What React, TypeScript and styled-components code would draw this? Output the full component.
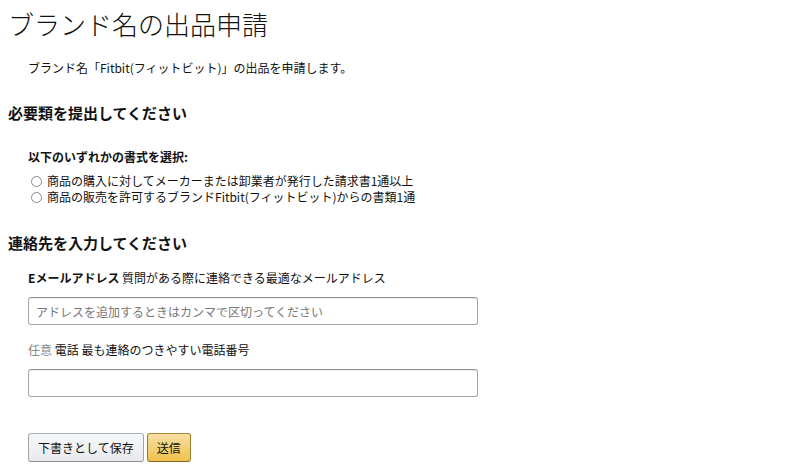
import styled, { createGlobalStyle } from 'styled-components';

const GlobalStyle = createGlobalStyle`
  body {
    margin: 0;
    background: #fff;
    font-family: "Noto Sans CJK JP", "Noto Sans", sans-serif;
    color: #111;
  }
`;

const Page = styled.main`
  padding: 8px;
`;

const Title = styled.h1`
  margin: 0;
  font-size: 26px;
  line-height: 32px;
  font-weight: 300;
  color: #111;
`;

const Intro = styled.p`
  margin: 19px 0 0;
  padding-left: 20px;
  font-size: 12px;
  line-height: 18px;
  color: #111;
`;

const SectionTitle = styled.h2<{ $gap: number }>`
  margin: ${({ $gap }) => $gap}px 0 0;
  font-size: 15px;
  line-height: 20px;
  font-weight: 700;
`;

const SectionBody = styled.div`
  padding-left: 20px;
`;

const ChoiceLabel = styled.div`
  margin-top: 26px;
  font-size: 12px;
  line-height: 16px;
  font-weight: 700;
`;

const RadioList = styled.div`
  margin-top: 8px;
  display: flex;
  flex-direction: column;
`;

const RadioRow = styled.label`
  display: flex;
  align-items: center;
  gap: 5px;
  font-size: 12px;
  line-height: 16px;
  color: #111;
`;

const Radio = styled.input.attrs({ type: 'radio' })`
  appearance: none;
  margin: 0 0 0 3px;
  width: 11px;
  height: 11px;
  border: 1px solid #8a8a8a;
  border-radius: 50%;
  background: #fff;
`;

const FieldLabel = styled.div`
  margin-top: 17px;
  font-size: 12px;
  line-height: 16px;
  color: #111;
`;

const Strong = styled.b`
  font-weight: 700;
`;

const Muted = styled.span`
  color: #888;
`;

const TextInput = styled.input`
  display: block;
  box-sizing: border-box;
  margin-top: 11px;
  width: 450px;
  height: 28px;
  padding: 0 7px;
  border: 1px solid #a6a6a6;
  border-top-color: #949494;
  border-radius: 3px;
  box-shadow: 0 1px 0 rgba(255, 255, 255, 0.5), 0 1px 0 rgba(0, 0, 0, 0.07) inset;
  font-family: inherit;
  font-size: 12px;
  color: #111;
  &::placeholder {
    color: #777;
  }
`;

const Actions = styled.div`
  margin-top: 36px;
  display: flex;
  gap: 3px;
`;

const Button = styled.button<{ $primary?: boolean }>`
  box-sizing: border-box;
  height: 29px;
  padding: 0 ${({ $primary }) => ($primary ? 9 : 9)}px;
  border-radius: 3px;
  border: 1px solid ${({ $primary }) => ($primary ? '#a88734' : '#adb1b8')};
  border-color: ${({ $primary }) =>
    $primary ? '#a88734 #9c7e31 #846a29' : '#adb1b8 #a2a6ac #8d9096'};
  background: ${({ $primary }) =>
    $primary
      ? 'linear-gradient(to bottom, #f7dfa5, #f0c14b)'
      : 'linear-gradient(to bottom, #f7f8fa, #e7e9ec)'};
  font-family: inherit;
  font-size: 12px;
  color: #111;
`;

export default function App() {
  return (
    <>
      <GlobalStyle />
      <Page>
        <Title>ブランド名の出品申請</Title>
        <Intro>ブランド名「Fitbit(フィットビット)」の出品を申請します。</Intro>

        <SectionTitle $gap={26}>必要類を提出してください</SectionTitle>
        <SectionBody>
          <ChoiceLabel>以下のいずれかの書式を選択:</ChoiceLabel>
          <RadioList>
            <RadioRow>
              <Radio name="doc" />
              商品の購入に対してメーカーまたは卸業者が発行した請求書1通以上
            </RadioRow>
            <RadioRow>
              <Radio name="doc" />
              商品の販売を許可するブランドFitbit(フィットビット)からの書類1通
            </RadioRow>
          </RadioList>
        </SectionBody>

        <SectionTitle $gap={28}>連絡先を入力してください</SectionTitle>
        <SectionBody>
          <FieldLabel>
            <Strong>Eメールアドレス</Strong> 質問がある際に連絡できる最適なメールアドレス
          </FieldLabel>
          <TextInput placeholder="アドレスを追加するときはカンマで区切ってください" />
          <FieldLabel>
            <Muted>任意</Muted> 電話 最も連絡のつきやすい電話番号
          </FieldLabel>
          <TextInput />
          <Actions>
            <Button>下書きとして保存</Button>
            <Button $primary>送信</Button>
          </Actions>
        </SectionBody>
      </Page>
    </>
  );
}
